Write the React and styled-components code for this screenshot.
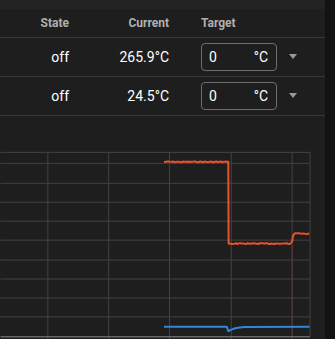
import React from 'react';
import styled, { createGlobalStyle } from 'styled-components';

const Global = createGlobalStyle`
  html, body {
    margin: 0;
    padding: 0;
    background: #1e1e1e;
    font-family: Roboto, "Liberation Sans", sans-serif;
    overflow: hidden;
  }
`;

const Page = styled.div`
  display: flex;
  width: 335px;
  height: 339px;
  overflow: hidden;
`;

const Panel = styled.div`
  width: 325px;
  background: #1e1e1e;
  display: flex;
  flex-direction: column;
`;

const Strip = styled.div`
  width: 10px;
  background: #121212;
`;

const TopBar = styled.div`
  height: 9px;
  background: #232323;
`;

const Row = styled.div`
  display: grid;
  grid-template-columns: 85px 100px 1fr;
  align-items: center;
  height: ${p => p.head ? '28px' : '38px'};
  border-bottom: 1px solid #383838;
  color: ${p => p.head ? '#b0b0b0' : '#ffffff'};
  font-size: ${p => p.head ? '12px' : '14px'};
  font-weight: ${p => p.head ? 700 : 400};
`;

const Cell = styled.div`
  padding: ${p => p.left ? '0 0 0 16px' : '0 16px 0 0'};
  display: flex;
  align-items: center;
  justify-content: ${p => p.left ? 'flex-start' : 'flex-end'};
`;

const Input = styled.div`
  box-sizing: border-box;
  width: 76px;
  height: 28px;
  border: 1px solid #6e6e6e;
  border-radius: 4px;
  display: flex;
  align-items: center;
  justify-content: space-between;
  padding: 0 8px 0 7px;
  font-size: 14px;
  color: #fff;
`;

const Caret = styled.div`
  width: 0;
  height: 0;
  margin-left: 12px;
  border-left: 4px solid transparent;
  border-right: 4px solid transparent;
  border-top: 5px solid #9a9a9a;
`;

const Chart = styled.svg`
  display: block;
  margin-top: auto;
`;

const rows = [
  { state: 'off', current: '265.9°C', target: '0' },
  { state: 'off', current: '24.5°C', target: '0' },
];

function jitter(x0, x1, y, amp, seed) {
  const pts = [];
  let s = seed;
  for (let x = x0; x <= x1; x += 1.5) {
    s = (s * 9301 + 49297) % 233280;
    const r = s / 233280 - 0.5;
    pts.push(`${x.toFixed(1)},${(y + r * amp).toFixed(2)}`);
  }
  return pts;
}

const hLines = [151, 162, 182, 201, 220, 239, 259, 278, 297, 316];
const vLines = [47, 108, 169, 231, 292];

function TempChart() {
  const red = [
    ...jitter(164, 227, 161, 1, 7),
    '228.5,161',
    '228.8,243',
    ...jitter(230, 291, 243, 1, 13),
    '292.5,241',
    '293.5,235',
    '295,233',
    ...jitter(296, 310, 233, 1.2, 21),
  ].join(' ');

  const blue =
    'M164,326.5 L227,326.5 L228.5,330.8 C232,328.5 237,327 245,326.6 L310,326.4';

  return (
    <Chart width="325" height="224" viewBox="0 115 325 224">
      {hLines.map(y => (
        <line key={y} x1="0" x2="310.5" y1={y + 0.5} y2={y + 0.5} stroke="#424242" strokeWidth="1" />
      ))}
      {vLines.map(x => (
        <line key={x} x1={x + 0.5} x2={x + 0.5} y1="151" y2="339" stroke="#424242" strokeWidth="1" />
      ))}
      <line x1="310.5" x2="310.5" y1="151" y2="336" stroke="#424242" strokeWidth="1" />
      <line x1="292.5" x2="292.5" y1="234" y2="336" stroke="rgba(200,70,50,0.25)" strokeWidth="1" />
      <line x1="0" x2="310.5" y1="336.5" y2="336.5" stroke="#8a8a8a" strokeWidth="1" />
      <polyline points={red} fill="none" stroke="#e8532f" strokeWidth="2" strokeLinejoin="round" />
      <path d={blue} fill="none" stroke="#2f87dc" strokeWidth="2" strokeLinejoin="round" />
    </Chart>
  );
}

export default function App() {
  return (
    <Page>
      <Global />
      <Panel>
        <TopBar />
        <Row head>
          <Cell>State</Cell>
          <Cell>Current</Cell>
          <Cell left>Target</Cell>
        </Row>
        {rows.map((r, i) => (
          <Row key={i}>
            <Cell>{r.state}</Cell>
            <Cell>{r.current}</Cell>
            <Cell left>
              <Input>
                <span>{r.target}</span>
                <span>°C</span>
              </Input>
              <Caret />
            </Cell>
          </Row>
        ))}
        <TempChart />
      </Panel>
      <Strip />
    </Page>
  );
}
